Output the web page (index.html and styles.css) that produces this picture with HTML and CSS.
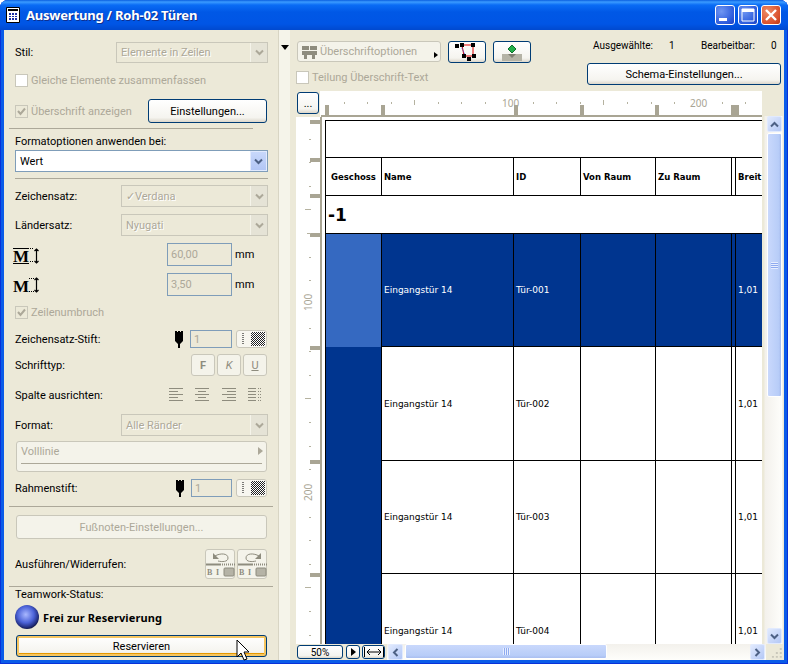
FILE: index.html
```html
<!DOCTYPE html>
<html lang="de">
<head>
<meta charset="utf-8">
<title>Auswertung / Roh-02 Türen</title>
<link rel="stylesheet" href="styles.css">
</head>
<body>
<svg class="defs" width="0" height="0" aria-hidden="true">
  <defs>
    <symbol id="chev" viewBox="0 0 9 7"><path d="M1 1.5 4.5 5 8 1.5" fill="none" stroke="currentColor" stroke-width="2"/></symbol>
    <pattern id="dither" width="2" height="2" patternUnits="userSpaceOnUse"><rect width="2" height="2" fill="#fff"/><rect width="1" height="1" fill="#222"/><rect x="1" y="1" width="1" height="1" fill="#222"/></pattern>
    <symbol id="pen" viewBox="0 0 8 17"><path d="M0 0h2v1h1V0h2v1h1V0h2v10L5 13v4H3v-4L0 10z" fill="#000"/></symbol>
    <symbol id="pat" viewBox="0 0 30 16"><path d="M6 2v12" stroke="#000" stroke-dasharray="1 1"/><rect x="14" y="1" width="14" height="14" fill="url(#dither)"/></symbol>
    <radialGradient id="ball" cx="45%" cy="40%" r="62%"><stop offset="0" stop-color="#a9b8ff"/><stop offset=".55" stop-color="#4c63d8"/><stop offset=".85" stop-color="#232f80"/><stop offset="1" stop-color="#10153f"/></radialGradient>
  </defs>
</svg>
<div class="window">
  <header class="titlebar">
    <svg class="title-icon" width="14" height="16" viewBox="0 0 14 16"><path d="M.5.5h13v15H.5z" fill="#fff" stroke="#000"/><path d="M2 2h10v2H2z" fill="#000"/><path d="M3 6h8v7H3z" fill="#1a2fa8"/><path d="M3 8.5h8M3 10.5h8M5.5 6v7M8.5 6v7" stroke="#fff"/></svg>
    <h1 class="title">Auswertung / Roh-02 Türen</h1>
    <div class="win-btns">
      <span class="win-btn"><svg width="20" height="20" viewBox="0 0 20 20"><rect x="4" y="13" width="8" height="3" fill="#fff"/></svg></span>
      <span class="win-btn"><svg width="20" height="20" viewBox="0 0 20 20"><path d="M4 4h12v12H4z" fill="none" stroke="#fff"/><rect x="4" y="4" width="12" height="3" fill="#fff"/></svg></span>
      <span class="win-btn close"><svg width="20" height="20" viewBox="0 0 20 20"><path d="M5 5l10 10M15 5 5 15" stroke="#fff" stroke-width="2.4"/></svg></span>
    </div>
  </header>

  <div class="client">
    <aside class="panel">
      <div class="row r-stil"><span class="label">Stil:</span><div class="select off w152"><span class="sel-text">Elemente in Zeilen</span><span class="sel-btn"><svg width="9" height="7"><use href="#chev"/></svg></span></div></div>
      <div class="row r-gleiche"><label class="check off"><span class="box"></span>Gleiche Elemente zusammenfassen</label></div>
      <div class="row r-ueber"><label class="check off"><span class="box"><svg width="11" height="11" viewBox="0 0 11 11"><path d="M2 5l2.5 3L9 2.5" fill="none" stroke="#aca899" stroke-width="2"/></svg></span>Überschrift anzeigen</label><button class="xp w119">Einstellungen...</button></div>
      <hr class="rule r-hr1">
      <div class="label r-flabel">Formatoptionen anwenden bei:</div>
      <div class="select on r-fsel"><span class="sel-text">Wert</span><span class="sel-btn"><svg width="9" height="7"><use href="#chev"/></svg></span></div>
      <hr class="rule r-hr2">
      <div class="row r-zs"><span class="label">Zeichensatz:</span><div class="select off w147"><span class="sel-text">✓Verdana</span><span class="sel-btn"><svg width="9" height="7"><use href="#chev"/></svg></span></div></div>
      <div class="row r-ls"><span class="label">Ländersatz:</span><div class="select off w147"><span class="sel-text">Nyugati</span><span class="sel-btn"><svg width="9" height="7"><use href="#chev"/></svg></span></div></div>
      <div class="row r-m1">
        <svg class="m-icon" width="26" height="23" viewBox="0 0 26 23"><path d="M0 5.500h16M0 20.500h16" stroke="#000"/><text x="0" y="19" class="m-glyph">M</text><path d="M17 5.500h4M17 18.500h4" stroke="#000" stroke-dasharray="1 1"/><path d="M23.500 6v14M21.500 8l2-2 2 2M21.500 18l2 2 2-2" fill="none" stroke="#000" stroke-width="1.200"/></svg>
        <span class="field w65">60,00</span><span class="unit">mm</span>
      </div>
      <div class="row r-m2">
        <svg class="m-icon" width="26" height="23" viewBox="0 0 26 23"><text x="0" y="19" class="m-glyph">M</text><path d="M16 5.500h5M16 18.500h5" stroke="#000" stroke-dasharray="1 1"/><path d="M23.500 5v14M21.500 7l2-2 2 2M21.500 17l2 2 2-2" fill="none" stroke="#000" stroke-width="1.200"/></svg>
        <span class="field w65">3,50</span><span class="unit">mm</span>
      </div>
      <div class="row r-wrap"><label class="check off"><span class="box"><svg width="11" height="11" viewBox="0 0 11 11"><path d="M2 5l2.500 3L9 2.500" fill="none" stroke="#aca899" stroke-width="2"/></svg></span>Zeilenumbruch</label></div>
      <div class="row r-stift"><span class="label">Zeichensatz-Stift:</span><div class="ctrls"><svg class="pen" width="8" height="17"><use href="#pen"/></svg><span class="field w42">1</span><span class="pat-btn"><svg width="30" height="16"><use href="#pat"/></svg></span></div></div>
      <div class="row r-font"><span class="label">Schrifttyp:</span><div class="styles"><span class="sty bold">F</span><span class="sty ital">K</span><span class="sty und">U</span></div></div>
      <div class="row r-align"><span class="label">Spalte ausrichten:</span>
        <svg class="aligns" width="94" height="14" viewBox="0 0 94 14"><g stroke="#8e8c7e"><path d="M0 .5h14M0 3.500h9M0 6.500h14M0 9.500h9M0 12.500h14"/><path d="M26 .5h14M29 3.500h8M26 6.500h14M29 9.500h8M26 12.500h14"/><path d="M53 .5h14M58 3.500h9M53 6.500h14M58 9.500h9M53 12.500h14"/><path d="M79 .5h8M79 3.500h8M79 6.500h8M79 9.500h8M79 12.500h8"/><path d="M89 .5h4M89 3.500h4M89 6.500h4M89 9.500h4M89 12.500h4" stroke-dasharray="1 1"/></g></svg>
      </div>
      <div class="row r-format"><span class="label">Format:</span><div class="select off w147"><span class="sel-text">Alle Ränder</span><span class="sel-btn"><svg width="9" height="7"><use href="#chev"/></svg></span></div></div>
      <div class="linebox r-line"><div class="linebox-top"><span>Volllinie</span><i class="tri"></i></div><div class="linebox-line"></div></div>
      <div class="row r-rahmen"><span class="label">Rahmenstift:</span><div class="ctrls"><svg class="pen" width="8" height="17"><use href="#pen"/></svg><span class="field w41">1</span><span class="pat-btn"><svg width="30" height="16"><use href="#pat"/></svg></span></div></div>
      <hr class="rule r-hr3">
      <button class="xp-off r-fuss" disabled>Fußnoten-Einstellungen...</button>
      <div class="row r-undo"><span class="label">Ausführen/Widerrufen:</span>
        <div class="undo-btns">
          <span class="undo"><svg width="30" height="28" viewBox="0 0 30 28"><path d="M9 6c5-3 13-3 13 2 0 4-6 4-10 3" fill="none" stroke="#8e8c7e"/><path d="M7 3v6h6z" fill="#8e8c7e"/><path d="M0 14.500h14" stroke="#8e8c7e" stroke-width="2"/><path d="M14 14.500h15" stroke="#8e8c7e" stroke-width="2" stroke-dasharray="1 1"/><text x="1" y="25" class="undo-t">B</text><text x="10" y="25" class="undo-t">I</text><rect x="18" y="18" width="10" height="8" rx="1" fill="#b5b3a6" stroke="#8e8c7e"/></svg></span>
          <span class="undo"><svg width="30" height="28" viewBox="0 0 30 28"><path d="M21 6c-5-3-13-3-13 2 0 4 6 4 10 3" fill="none" stroke="#8e8c7e"/><path d="M23 3v6h-6z" fill="#8e8c7e"/><path d="M0 14.500h14" stroke="#8e8c7e" stroke-width="2"/><path d="M14 14.500h15" stroke="#8e8c7e" stroke-width="2" stroke-dasharray="1 1"/><text x="1" y="25" class="undo-t">B</text><text x="10" y="25" class="undo-t">I</text><rect x="18" y="18" width="10" height="8" rx="1" fill="#b5b3a6" stroke="#8e8c7e"/></svg></span>
        </div>
      </div>
      <hr class="rule r-hr4">
      <div class="label r-team">Teamwork-Status:</div>
      <div class="r-status"><svg width="24" height="24" viewBox="0 0 24 24"><circle cx="12" cy="12" r="12" fill="url(#ball)"/></svg><strong>Frei zur Reservierung</strong></div>
      <button class="xp focus r-res">Reservieren</button>
    </aside>

    <div class="splitter"><i class="split-tri"></i></div>

    <main class="main">
      <div class="head">
        <div class="head-left">
          <div class="tools">
            <span class="drop">
              <svg width="15" height="14" viewBox="0 0 15 14"><path d="M0 1h15v9h-2v4h-3v-4H5v4H2v-4H0z" fill="#8e8c7e"/><path d="M0 5.500h15M7.500 1v4" stroke="#f4f3ea"/></svg>
              <span>Überschriftoptionen</span><i class="drop-tri"></i>
            </span>
            <button class="xp icon-btn"><svg width="26" height="18" viewBox="0 0 26 18"><path d="M8 2h11v11H10z" fill="none" stroke="#e00000" stroke-width="1"/><path d="M7 3l5 11" stroke="#2244dd" stroke-dasharray="1 1"/><path d="M1 1h4v4H1zM6 0h4v4H6zM17 0h4v4h-4zM8 11h4v4H8zM18 11h4v4h-4zM13 14h4v4h-4z" fill="#000"/></svg></button>
            <button class="xp icon-btn"><svg width="26" height="18" viewBox="0 0 26 18"><path d="M3 11h20v7H3z" fill="#b5b3a6"/><path d="M13 2l4 4-4 4-4-4z" fill="#22b04a" stroke="#0d6d2c"/><path d="M9 11h8l-4 4z" fill="#7f7d70"/></svg></button>
          </div>
          <label class="check off r-teil"><span class="box"></span>Teilung Überschrift-Text</label>
        </div>
        <div class="head-right">
          <div class="stats"><span class="s1">Ausgewählte:</span><span class="s2">1</span><span class="s3">Bearbeitbar:</span><span class="s4">0</span></div>
          <button class="xp schema">Schema-Einstellungen...</button>
        </div>
      </div>

      <div class="canvas">
        <div class="corner"><button class="xp dots">...</button></div>
        <svg class="ruler-top" width="442" height="26" viewBox="320 91 442 26">
          <g fill="#a9a594"><path d="M321 115h441v2H321zM325 105h4v10h-4zM381 105h4v10h-4zM514 105h4v10h-4zM580 105h4v10h-4zM655 105h4v10h-4zM731 105h8v10h-8z"/></g>
          <g stroke="#b5b2a0"><path d="M344.500 102v2M367.500 102v2M391.500 102v2M414.500 100v5M438.500 102v2M461.500 102v2M485.500 102v2M533.500 102v2M556.500 102v2M580.500 102v2M603.500 100v5M627.500 102v2M651.500 102v2M674.500 102v2M722.500 102v2M745.500 102v2"/></g>
          <text x="502" y="107" class="rtext">100</text><text x="690" y="107" class="rtext">200</text>
        </svg>
        <svg class="ruler-left" width="26" height="527" viewBox="296 117 26 527">
          <path d="M320 117h2v527h-2zM310 120h10v4h-10zM310 158h10v4h-10zM310 194h10v4h-10zM310 233h10v4h-10zM310 346h10v4h-10zM310 460h10v4h-10zM310 573h10v4h-10z" fill="#a9a594"/>
          <path d="M309 139.500h2M309 162.500h2M309 186.500h2M305 209.500h6M307 233.500h4M309 257.500h2M309 280.500h2M309 328.500h2M309 351.500h2M309 375.500h2M305 398.500h6M309 422.500h2M309 446.500h2M309 469.500h2M309 517.500h2M309 540.500h2M309 564.500h2M305 587.500h6M309 611.500h2M309 635.500h2" stroke="#b5b2a0"/>
          <text transform="translate(312 311) rotate(-90)" class="rtext">100</text><text transform="translate(312 501) rotate(-90)" class="rtext">200</text>
        </svg>
        <div class="sheet">
          <table class="schedule">
            <colgroup><col class="c1"><col class="c2"><col class="c3"><col class="c4"><col class="c5"><col class="c6"><col class="c7"></colgroup>
            <tbody>
              <tr class="h37"><td colspan="7"></td></tr>
              <tr class="h38 thead"><td class="geschoss">Geschoss</td><td>Name</td><td>ID</td><td>Von Raum</td><td>Zu Raum</td><td></td><td>Breit</td></tr>
              <tr class="h38"><td colspan="7" class="group">-1</td></tr>
              <tr class="h113 sel"><td class="cur"></td><td>Eingangstür 14</td><td>Tür-001</td><td></td><td></td><td></td><td>1,01</td></tr>
              <tr class="h114"><td class="dark" rowspan="3"></td><td>Eingangstür 14</td><td>Tür-002</td><td></td><td></td><td></td><td>1,01</td></tr>
              <tr class="h113"><td>Eingangstür 14</td><td>Tür-003</td><td></td><td></td><td></td><td>1,01</td></tr>
              <tr class="h114"><td>Eingangstür 14</td><td>Tür-004</td><td></td><td></td><td></td><td>1,01</td></tr>
            </tbody>
          </table>
        </div>
        <div class="vscroll">
          <span class="sb-btn up"><svg width="9" height="7"><use href="#chev"/></svg></span>
          <span class="sb-thumb v"><i class="grip v"></i></span>
          <span class="sb-btn down"><svg width="9" height="7"><use href="#chev"/></svg></span>
        </div>
        <div class="bottom">
          <button class="xp zoom">50%</button>
          <button class="xp mini"><i class="mini-tri"></i></button>
          <button class="xp fit"><svg width="20" height="10" viewBox="0 0 20 10"><path d="M.5 0v10M19.500 0v10M3 5h14M6 2 3 5l3 3M14 2l3 3-3 3" fill="none" stroke="#000"/></svg></button>
          <div class="hscroll">
            <span class="sb-btn left"><svg width="9" height="7"><use href="#chev"/></svg></span>
            <span class="sb-thumb h"><i class="grip h"></i></span>
            <span class="sb-btn right"><svg width="9" height="7"><use href="#chev"/></svg></span>
          </div>
          <svg class="resize" width="14" height="14" viewBox="0 0 14 14"><path d="M10 3h2v2h-2zM6 7h2v2H6zM10 7h2v2h-2zM2 11h2v2H2zM6 11h2v2H6zM10 11h2v2h-2z" fill="#c9c7ba"/></svg>
        </div>
      </div>
    </main>
  </div>
  <svg class="cursor" width="14" height="23" viewBox="0 0 14 23"><path d="M1 1v17l4-4 3 7 3-1-3-7h5z" fill="#fff" stroke="#000"/></svg>
</div>
</body>
</html>
```

FILE: styles.css
```css
* { box-sizing: border-box; }
html, body { margin: 0; padding: 0; background: #fff; }
body { width: 788px; height: 664px; overflow: hidden; font: 11px Roboto, "Liberation Sans", sans-serif; letter-spacing: 0; color: #000; }
.defs { display: block; height: 0; }
.window { position: relative; width: 788px; height: 664px; display: flex; flex-direction: column; background: #0a5be8; border-radius: 8px 8px 0 0; padding: 0 4px 4px; box-shadow: inset 1px 0 #0831d9, inset -1px 0 #0831d9, inset 0 -1px #0831d9; overflow: hidden; }

/* title bar */
.titlebar { flex: 0 0 30px; margin: 0 -4px; display: flex; align-items: center; padding: 0 7px 0 6px; background: linear-gradient(#0a5fe0 0, #3b9bff 2px, #0a6cf5 5px, #0058e6 12px, #0055e5 24px, #0049cf 30px); }
.title-icon { margin-right: 6px; }
.title { margin: 0; font: bold 13px/1 "Noto Sans", sans-serif; letter-spacing: -.2px; color: #fff; text-shadow: 1px 1px #0f2f8f; flex: 1; }
.win-btns { display: flex; gap: 3px; margin-right: 0; }
.win-btn { width: 20px; height: 20px; border: 1px solid #fff; border-radius: 3px; background: radial-gradient(circle at 30% 30%, #6f96f2, #2c5bdc 70%, #1c3fc0); display: block; }
.win-btn svg { display: block; margin: -1px; }
.win-btn.close { background: radial-gradient(circle at 30% 30%, #ee8b66, #d9502c 70%, #b63515); }

/* layout */
.client { flex: 1; display: flex; background: #ece9d8; min-height: 0; }
.panel { flex: 0 0 274px; display: flex; flex-direction: column; padding: 0 10px 0 11px; }
.splitter { flex: 0 0 12px; background: #f5f4ea; border-left: 1px solid #d8d5c4; padding: 15px 0 0 2px; }
.split-tri { display: block; width: 0; height: 0; border: 4px solid transparent; border-top: 5px solid #000; border-bottom: 0; }
.main { flex: 1; display: flex; flex-direction: column; min-width: 0; }

/* left panel rows */
.row { display: flex; align-items: center; justify-content: space-between; }
.label { white-space: nowrap; }
.r-stil { margin-top: 12px; height: 21px; }
.r-gleiche { margin-top: 10px; height: 14px; }
.r-ueber { margin-top: 12px; height: 24px; padding-right: 1px; }
.rule { border: 0; height: 1px; margin: 0; background: #aca899; }
.r-hr1 { margin: 5px 15px 0 -6px; }
.r-flabel { margin-top: 6px; height: 13px; line-height: 13px; }
.r-fsel { margin-top: 2px; height: 22px; flex: 0 0 22px; }
.r-hr2 { margin-top: 6px; }
.r-zs { margin-top: 6px; height: 22px; }
.r-ls { margin-top: 7px; height: 22px; }
.r-m1 { margin-top: 7px; height: 23px; justify-content: flex-start; }
.r-m2 { margin-top: 7px; height: 23px; justify-content: flex-start; }
.r-wrap { margin-top: 9px; height: 14px; }
.r-stift { margin-top: 11px; height: 18px; }
.r-font { margin-top: 6px; height: 22px; padding-right: 1px; }
.r-align { margin-top: 10px; height: 18px; }
.r-format { margin-top: 10px; height: 22px; }
.r-line { margin: 5px 1px 0; height: 31px; }
.r-rahmen { margin-top: 7px; height: 18px; }
.r-hr3 { margin: 9px -5px 0 -6px; }
.r-fuss { margin: 8px 1px 0; height: 24px; }
.r-undo { margin-top: 10px; height: 30px; padding-right: 1px; }
.r-hr4 { margin: 7px -5px 0 -6px; }
.r-team { margin-top: 2px; height: 12px; line-height: 12px; }
.r-status { margin-top: 4px; height: 24px; display: flex; align-items: center; gap: 4px; }
.r-status strong { font: 700 11px "Noto Sans", sans-serif; letter-spacing: .1px; }
.r-res { margin: 6px 1px 0; height: 22px; }

/* selects */
.select { display: flex; align-items: center; border: 1px solid; padding-left: 4px; }
.row .select { height: 100%; }
.w152 { width: 152px; } .w147 { width: 147px; }
.sel-text { flex: 1; white-space: nowrap; }
.sel-btn { width: 17px; height: 100%; display: flex; align-items: center; justify-content: center; }
.sel-btn svg { display: block; }
.select.off { border-color: #c9c7ba; color: #aca899; text-shadow: 1px 1px #fff; }
.select.off .sel-btn { background: #e5e3d6; color: #aca899; border-left: 1px solid #f5f4ea; }
.select.on { border-color: #7f9db9; background: #fff; }
.select.on .sel-btn { background: linear-gradient(#c8d8fb, #b2c6f5); color: #4d6185; border: 1px solid #e1eafe; }

/* checks */
.check { display: flex; align-items: center; gap: 3px; white-space: nowrap; }
.check.off { color: #aca899; }
.box { width: 13px; height: 13px; border: 1px solid #c9c7ba; background: #fff; display: block; }
.r-ueber .box, .r-wrap .box { background: #ece9d8; }
.box svg { display: block; }

/* buttons */
button { font: inherit; color: inherit; margin: 0; padding: 0; letter-spacing: inherit; }
.xp { border: 1px solid #003c74; border-radius: 3px; background: linear-gradient(#fff, #f5f4ef 80%, #dcd7cb); display: flex; align-items: center; justify-content: center; }
.xp.focus { box-shadow: inset 0 0 0 2px #f5c560, inset 0 -1px 0 2px #e59700; }
.xp-off { border: 1px solid #c9c7ba; border-radius: 3px; background: #f4f3ea; color: #aca899; display: flex; align-items: center; justify-content: center; }
.w119 { width: 119px; height: 24px; }

/* fields */
.field { display: flex; align-items: center; height: 100%; border: 1px solid #7f9db9; color: #aca899; padding-left: 3px; }
.m-icon { display: block; margin-left: -2px; }
.m-glyph { font: bold 17px "Liberation Serif", serif; letter-spacing: 0; fill: #000; }
.w65 { width: 65px; margin-left: 128px; }
.w42 { width: 42px; } .w41 { width: 41px; }
.unit { margin-left: 3px; }
.ctrls { display: flex; align-items: center; height: 100%; gap: 4px; padding-right: 1px; }
.pen { display: block; margin-right: 3px; }
.pat-btn { width: 31px; height: 18px; border: 1px solid #c9c7ba; border-radius: 3px; background: #f7f6ef; display: block; }
.pat-btn svg { display: block; }
.styles { display: flex; gap: 2px; }
.sty { width: 24px; height: 22px; border: 1px solid #c9c7ba; border-radius: 3px; background: #f4f3ea; color: #8e8c7e; display: flex; align-items: center; justify-content: center; font-size: 11px; }
.sty.bold { font-weight: 700; } .sty.ital { font-style: italic; } .sty.und { text-decoration: underline; }
.aligns { display: block; margin-right: 5px; }
.linebox { border: 1px solid #c9c7ba; border-radius: 3px; background: #f4f3ea; color: #aca899; padding: 1px 4px; display: flex; flex-direction: column; }
.linebox-top { display: flex; justify-content: space-between; align-items: center; height: 16px; }
.tri { display: block; width: 0; height: 0; border: 4px solid transparent; border-left: 5px solid #aca899; border-right: 0; margin-right: -1px; }
.linebox-line { height: 1px; background: #aca899; margin-top: 4px; }
.undo-btns { display: flex; gap: 2px; }
.undo { width: 30px; height: 30px; border: 1px solid #c9c7ba; border-radius: 3px; background: #f4f3ea; display: block; }
.undo svg { display: block; }
.undo-t { font: bold 8px "Liberation Serif", serif; fill: #8e8c7e; }

/* header of main */
.head { flex: 0 0 61px; display: flex; justify-content: space-between; padding: 11px 3px 0 6px; }
.head-left { display: flex; flex-direction: column; }
.tools { display: flex; gap: 7px; height: 22px; padding-left: 1px; }
.drop { width: 144px; height: 21px; border: 1px solid #c9c7ba; border-radius: 3px; background: #f4f3ea; color: #aca899; display: flex; align-items: center; gap: 3px; padding-left: 4px; position: relative; }
.drop-tri { position: absolute; right: 2px; bottom: 3px; width: 0; height: 0; border: 3px solid transparent; border-left: 4px solid #000; border-right: 0; }
.icon-btn { width: 38px; height: 22px; }
.r-teil { margin-top: 8px; }
.head-right { width: 194px; display: flex; flex-direction: column; }
.stats { height: 13px; margin-top: -2px; display: flex; font-size: 10px; line-height: 13px; white-space: nowrap; margin-bottom: 11px; padding-left: 6px; }
.s1 { width: 76px; } .s2 { width: 32px; } .s3 { width: 70px; }
.schema { height: 22px; width: 194px; }

/* canvas */
.canvas { flex: 1; margin-left: 6px; display: grid; grid-template-columns: 24px 442px 22px; grid-template-rows: 26px 527px 16px; min-height: 0; }
.corner { padding: 1px 0 0 1px; }
.dots { width: 22px; height: 22px; }
.ruler-top { display: block; background: #fff; }
.ruler-left { display: block; background: #fff; margin-right: -2px; grid-column: 1; grid-row: 2; position: relative; z-index: 1; }
.rtext { font: 10px "Noto Sans", sans-serif; letter-spacing: 0; fill: #a9a594; }
.sheet { grid-column: 2; grid-row: 2; background: #fff; overflow: hidden; padding: 3px 0 0 3px; margin-left: 2px; }
.schedule { border-collapse: separate; border-spacing: 0; table-layout: fixed; width: 470px; border-top: 1px solid #000; border-left: 1px solid #000; font: 9px "DejaVu Sans", sans-serif; letter-spacing: 0; }
.c1 { width: 56px; } .c2 { width: 132px; } .c3 { width: 67px; } .c4 { width: 75px; } .c5 { width: 76px; } .c6 { width: 4px; } .c7 { width: 60px; }
.schedule td { border-right: 1px solid #000; border-bottom: 1px solid #000; padding: 0 0 0 2px; white-space: nowrap; overflow: hidden; vertical-align: middle; }
.h37 td { height: 37px; } .h38 td { height: 38px; } .h113 td { height: 113px; } .h114 td { height: 114px; }
.thead td { font-weight: 700; font-size: 8.500px; }
.schedule .geschoss { padding: 0; text-align: center; }
.schedule .group { font: bold 17px "DejaVu Sans", sans-serif; }
.sel td { background: #00358f; color: #fff; }
.schedule .cur { background: #3569c1; border-bottom: 0; }
.schedule .dark { background: #00358f; height: auto; border-bottom: 0; }

/* scrollbars */
.vscroll { grid-column: 3; grid-row: 1 / 3; padding: 25px 2px 0 4px; display: flex; flex-direction: column; align-items: center; }
.vscroll { background: linear-gradient(#ece9d8 0, #ece9d8 25px, transparent 25px), linear-gradient(90deg, #ece9d8 2px, #f3f1ec 3px, #fefefb 20px, #ece9d8 21px); }
.sb-btn { display: flex; align-items: center; justify-content: center; width: 15px; height: 16px; flex: 0 0 auto; border: 1px solid #e1eafe; border-radius: 2px; background: linear-gradient(135deg, #e1eafe, #b4c8f6); color: #4d6185; }
.sb-btn svg { display: block; }
.sb-btn.up svg { transform: rotate(180deg); }
.sb-btn.left svg { transform: rotate(90deg); }
.sb-btn.right svg { transform: rotate(-90deg); }
.sb-thumb { display: flex; align-items: center; justify-content: center; border: 1px solid #fff; border-radius: 2px; }
.sb-thumb.v { width: 15px; height: 265px; margin-top: 1px; margin-bottom: 231px; background: linear-gradient(90deg, #c9d8fc, #b8cdf8 80%, #a9bef0); }
.sb-thumb.h { width: 202px; height: 15px; margin-left: 2px; margin-right: 143px; background: linear-gradient(#c9d8fc, #b8cdf8 80%, #a9bef0); }
.grip.v { width: 7px; height: 7px; background: repeating-linear-gradient(#e7eefe 0 1px, #8eaaf0 1px 2px); }
.grip.h { width: 7px; height: 7px; background: repeating-linear-gradient(90deg, #e7eefe 0 1px, #8eaaf0 1px 2px); }
.bottom { grid-column: 1 / 4; grid-row: 3; display: flex; align-items: flex-start; padding: 1px 0 0 1px; gap: 2px; background: #ece9d8; }
.zoom { width: 47px; height: 14px; font-size: 10px; }
.mini { width: 14px; height: 14px; margin-left: 1px; }
.mini-tri { display: block; width: 0; height: 0; border: 4px solid transparent; border-left: 5px solid #000; border-right: 0; margin-left: 2px; }
.fit { width: 24px; height: 14px; }
.fit svg { display: block; }
.hscroll { display: flex; align-items: flex-start; margin-top: -1px; width: 379px; height: 16px; padding: 0 1px; background: linear-gradient(#f3f1ec, #fefefb); }
.resize { display: block; margin-left: 2px; }

/* pointer */
.cursor { position: absolute; left: 236px; top: 639px; }
```
